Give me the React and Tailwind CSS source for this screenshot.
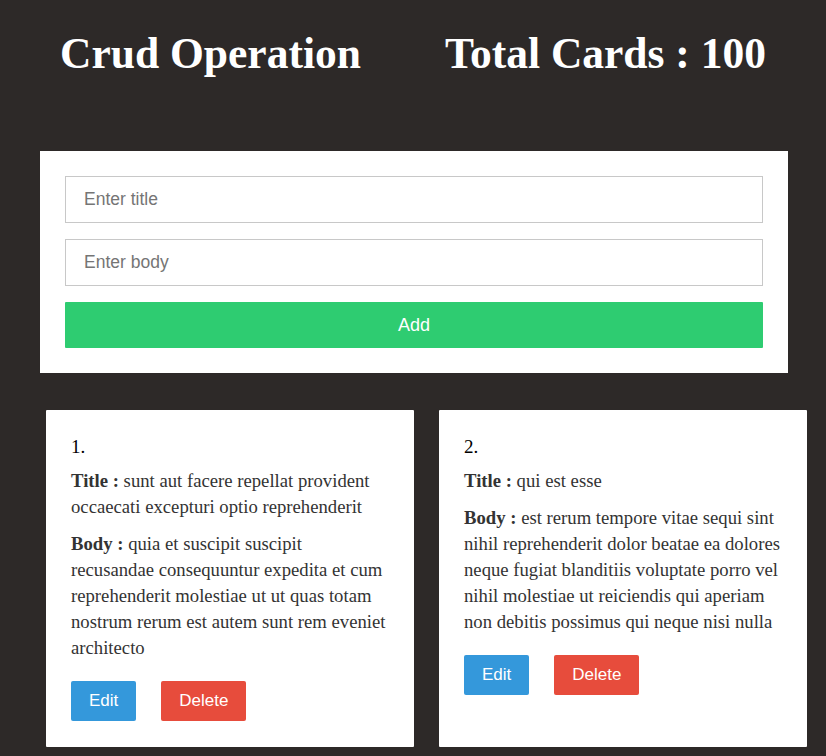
import { useState } from "react";

const seed = [
  {
    id: 1,
    title: "sunt aut facere repellat provident occaecati excepturi optio reprehenderit",
    body: "quia et suscipit suscipit recusandae consequuntur expedita et cum reprehenderit molestiae ut ut quas totam nostrum rerum est autem sunt rem eveniet architecto",
  },
  {
    id: 2,
    title: "qui est esse",
    body: "est rerum tempore vitae sequi sint nihil reprehenderit dolor beatae ea dolores neque fugiat blanditiis voluptate porro vel nihil molestiae ut reiciendis qui aperiam non debitis possimus qui neque nisi nulla",
  },
];

const serif = "font-['Liberation_Serif','Times_New_Roman',serif]";
const sans = "font-['Liberation_Sans',Arial,sans-serif]";

const Card = ({ post, index }) => (
  <div className="bg-white px-[25px] pt-[24px] pb-[26px] rounded-[1px]">
    <p className={`${serif} text-[19px] leading-[26px] text-black`}>{index}.</p>
    <p className={`${serif} text-[18.7px] leading-[26px] text-[#333] mt-[8px]`}>
      <b>Title :</b> {post.title}
    </p>
    <p className={`${serif} text-[18.7px] leading-[26px] text-[#333] mt-[11px]`}>
      <b>Body :</b> {post.body}
    </p>
    <div className="flex gap-[25px] mt-[20px]">
      <button className={`${sans} h-[40px] px-[18px] bg-[#3498db] text-white text-[17px] rounded-[2px]`}>
        Edit
      </button>
      <button className={`${sans} h-[40px] px-[18px] bg-[#e74c3c] text-white text-[17px] rounded-[2px]`}>
        Delete
      </button>
    </div>
  </div>
);

export default function App() {
  const [posts] = useState(seed);

  return (
    <div className="min-h-[756px] w-full bg-[#2d2928] overflow-hidden">
      {/* header */}
      <div className="flex justify-center gap-[84px] pt-[28px]">
        <h1 className={`${serif} font-bold text-white text-[43.5px] leading-[50px]`}>Crud Operation</h1>
        <h1 className={`${serif} font-bold text-white text-[43.5px] leading-[50px]`}>Total Cards : 100</h1>
      </div>

      {/* form */}
      <div className="ml-[40px] mt-[73px] w-[748px] bg-white p-[25px] flex flex-col gap-[16px]">
        <input
          placeholder="Enter title"
          className={`${sans} h-[47px] border border-[#c8c8c8] px-[18px] text-[17.5px] placeholder:text-[#757575] outline-none`}
        />
        <input
          placeholder="Enter body"
          className={`${sans} h-[47px] border border-[#c8c8c8] px-[18px] text-[17.5px] placeholder:text-[#757575] outline-none`}
        />
        <button className={`${sans} h-[46px] bg-[#2ecc71] text-white text-[18px] rounded-[1px]`}>
          Add
        </button>
      </div>

      {/* cards */}
      <div className="grid grid-cols-[368px_368px] gap-[25px] pl-[46px] mt-[37px] pb-[20px]">
        {posts.map((p, i) => (
          <Card key={p.id} post={p} index={i + 1} />
        ))}
      </div>
    </div>
  );
}
